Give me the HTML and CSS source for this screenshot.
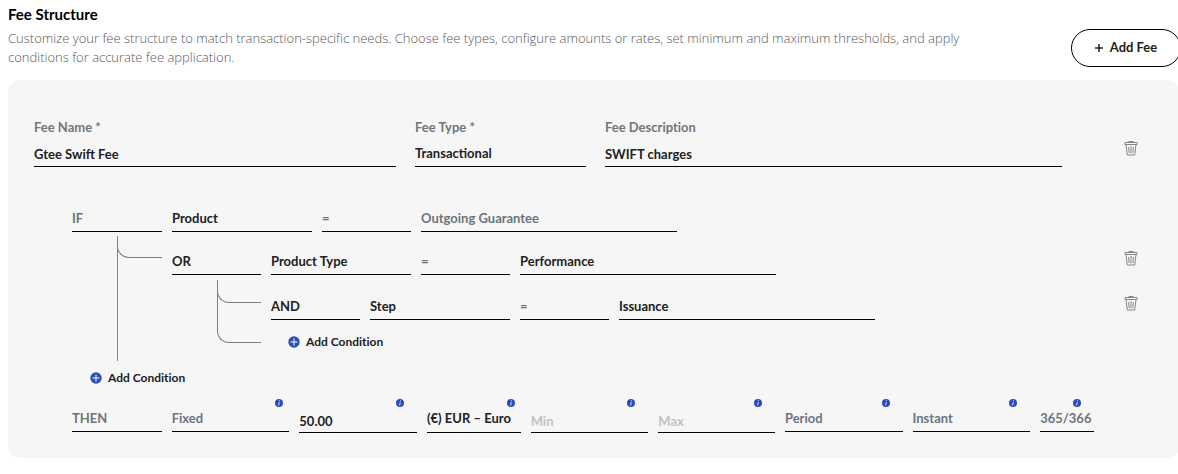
FILE: index.html
```html
<!DOCTYPE html>
<html lang="en">
<head>
<meta charset="utf-8">
<title>Fee Structure</title>
<link rel="stylesheet" href="styles.css">
</head>
<body>
<svg class="sprite" aria-hidden="true">
  <symbol id="trash" viewBox="0 0 14 16">
    <path d="M4.5 1.5h5M1 2.5h12v2H1zM2 4.5l1.3 10.5h7.4L12 4.5M4.6 7l.6 6M7 6v7.500M9.400 7l-.6 6" fill="none" stroke="currentColor"/>
  </symbol>
  <symbol id="add" viewBox="0 0 12 12">
    <circle cx="6" cy="6" r="5.700" fill="#2a4db8"/>
    <path d="M6 2.500v7M2.500 6h7" stroke="#fff" fill="none"/>
  </symbol>
  <symbol id="info" viewBox="0 0 8 8">
    <circle cx="4" cy="4" r="4" fill="#2a4db8"/>
    <path d="M4.500 1.400l-.1.900M4.200 3.200l-.5 3.200" stroke="#dfe5f7" fill="none"/>
  </symbol>
</svg>
<main class="page">
  <header class="header">
    <div class="intro">
      <h1 class="title">Fee Structure</h1>
      <p class="description">Customize your fee structure to match transaction-specific needs. Choose fee types, configure amounts or rates, set minimum and maximum thresholds, and apply conditions for accurate fee application.</p>
    </div>
    <button class="add-fee" type="button"><svg class="plus" viewBox="0 0 8 8" aria-hidden="true"><path d="M4 0v8M0 4h8" stroke="currentColor" stroke-width="1.500"/></svg>Add Fee</button>
  </header>
  <form class="card">
    <div class="summary">
      <div class="labelled"><label for="name">Fee Name *</label><input class="field" id="name" type="text" value="Gtee Swift Fee"></div>
      <div class="labelled"><label for="type">Fee Type *</label><select class="field" id="type"><option>Transactional</option></select></div>
      <div class="labelled"><label for="desc">Fee Description</label><input class="field" id="desc" type="text" value="SWIFT charges"></div>
      <button class="trash" type="button" aria-label="Delete fee"><svg><use href="#trash"/></svg></button>
    </div>

    <div class="rules">
      <div class="rule rule-root">
        <select class="field muted" aria-label="If" disabled><option>IF</option></select>
        <select class="field" aria-label="Attribute"><option>Product</option></select>
        <select class="field muted" aria-label="Operator" disabled><option>=</option></select>
        <select class="field muted" aria-label="Value" disabled><option>Outgoing Guarantee</option></select>
      </div>
      <div class="branch branch-outer">
        <div class="stem"><div class="line"><div class="elbow"></div></div></div>
        <div class="nested">
          <div class="rule rule-outer">
            <select class="field" aria-label="Connector"><option>OR</option></select>
            <select class="field" aria-label="Attribute"><option>Product Type</option></select>
            <select class="field muted" aria-label="Operator" disabled><option>=</option></select>
            <select class="field" aria-label="Value"><option>Performance</option></select>
            <button class="trash" type="button" aria-label="Delete condition"><svg><use href="#trash"/></svg></button>
          </div>
          <div class="branch branch-inner">
            <div class="stem"><div class="line line-end"><div class="elbow"></div></div></div>
            <div class="nested">
              <div class="rule rule-inner">
                <select class="field" aria-label="Connector"><option>AND</option></select>
                <select class="field" aria-label="Attribute"><option>Step</option></select>
                <select class="field muted" aria-label="Operator" disabled><option>=</option></select>
                <select class="field" aria-label="Value"><option>Issuance</option></select>
                <button class="trash" type="button" aria-label="Delete condition"><svg><use href="#trash"/></svg></button>
              </div>
              <button class="add-condition" type="button"><svg><use href="#add"/></svg>Add Condition</button>
            </div>
          </div>
        </div>
      </div>
      <button class="add-condition" type="button"><svg><use href="#add"/></svg>Add Condition</button>
    </div>

    <div class="outcome">
      <div class="cell"><select class="field muted" aria-label="Then" disabled><option>THEN</option></select></div>
      <div class="cell near"><svg class="info"><use href="#info"/></svg><select class="field muted" aria-label="Fee basis" disabled><option>Fixed</option></select></div>
      <div class="cell"><svg class="info"><use href="#info"/></svg><input class="field tall" type="text" aria-label="Amount" value="50.00"></div>
      <div class="cell near"><svg class="info"><use href="#info"/></svg><select class="field currency" aria-label="Currency"><option>(€) EUR – Euro</option></select></div>
      <div class="cell"><svg class="info"><use href="#info"/></svg><input class="field tall" type="text" aria-label="Minimum" placeholder="Min"></div>
      <div class="cell"><svg class="info"><use href="#info"/></svg><input class="field tall" type="text" aria-label="Maximum" placeholder="Max"></div>
      <div class="cell"><svg class="info"><use href="#info"/></svg><select class="field muted" aria-label="Period" disabled><option>Period</option></select></div>
      <div class="cell"><svg class="info"><use href="#info"/></svg><select class="field muted" aria-label="Timing" disabled><option>Instant</option></select></div>
      <div class="cell"><svg class="info"><use href="#info"/></svg><select class="field muted" aria-label="Day count" disabled><option>365/366</option></select></div>
    </div>
  </form>
</main>
</body>
</html>
```

FILE: styles.css
```css
* { box-sizing: border-box; }
body {
  margin: 0;
  background: #fff;
  color: #212121;
  font: 13px/19px Lato, "Open Sans", sans-serif;
  font-variant-ligatures: none;
  overflow-x: hidden;
}
.sprite { display: none; }
button { font: inherit; color: inherit; background: none; border: 0; padding: 0; cursor: pointer; }
.page { padding: 5px 0 16px 8px; margin-right: -2px; }

.header { display: flex; justify-content: space-between; align-items: flex-end; padding-bottom: 13px; }
.intro { max-width: 1010px; }
.title { margin: 0 0 5px; font-size: 15px; line-height: 19px; font-weight: 700; color: #000; }
.description { margin: 0; font-family: "Open Sans", sans-serif; font-size: 13px; font-weight: 300; color: #58585b; }
.add-fee {
  display: flex; align-items: center; justify-content: center; gap: 7px;
  flex: none; width: 110px; height: 38px; margin-right: -1px; padding-bottom: 1px;
  border: 1px solid #000; border-radius: 19px;
  background: #fff; font-size: 13px; font-weight: 700;
}
.plus { width: 8px; height: 8px; }

.card { background: #f6f6f6; border-radius: 13px; padding: 38px 0 25px 26px; }
.summary { display: grid; grid-template-columns: 362fr 171fr 457fr 99px; column-gap: 19px; padding-bottom: 39px; }
.summary .trash { padding-top: 11px; }
.labelled { display: flex; flex-direction: column; gap: 4px; min-width: 0; }
.labelled label { font-size: 13px; font-weight: 700; color: #757578; }

.field {
  display: block; width: 100%; min-width: 0; height: 26px; margin: 0; padding: 0;
  border: 0; border-bottom: 1px solid #000; border-radius: 0;
  background: none; appearance: none; outline: 0; opacity: 1;
  font: 700 13px/19px Lato, "Open Sans", sans-serif; color: #212121;
}
.field.muted { color: #6c757d; }
.field::placeholder { color: #bfc2c8; opacity: 1; }

.trash { display: flex; align-items: center; justify-content: center; color: #85868c; }
.trash svg { width: 14px; height: 16px; }

.rules { padding-left: 38px; }
.rule { display: grid; column-gap: 10px; }
.rule-root { grid-template-columns: 90fr 140fr 89fr 256fr 493fr; }
.rule-outer { grid-template-columns: 89fr 140fr 89fr 256fr 286fr 98px; padding-top: 13px; }
.rule-inner { grid-template-columns: 89fr 140fr 89fr 256fr 187fr 98px; padding-top: 14px; }
.rule .trash { grid-column: 6; height: 18px; }
.branch { display: grid; column-gap: 10px; }
.branch-outer { grid-template-columns: 90fr 1008fr; margin-top: 4px; }
.branch-outer > .nested { padding-bottom: 18px; }
.branch-inner { grid-template-columns: 89fr 909fr; margin-top: 5px; }
.stem { padding-left: 50%; }
.line { height: 100%; border-left: 1px solid #808080; }
.line-end { border-bottom: 1px solid #808080; border-bottom-left-radius: 12px; }
.elbow { height: 22px; margin-left: -1px; border: solid #808080; border-width: 0 0 1px 1px; border-bottom-left-radius: 12px; }
.line-end .elbow { height: 23px; }
.add-condition {
  display: flex; align-items: center; gap: 6px; margin: 9px 0 0 18px;
  font-size: 12px; line-height: 16px; font-weight: 700;
}
.branch-inner .add-condition { margin: 14px 0 -7px 17px; }
.add-condition svg { width: 12px; height: 12px; }

.outcome {
  display: grid; column-gap: 10px; align-items: start;
  grid-template-columns: 90fr 118fr 118fr 94fr 118fr 117fr 118fr 118fr 54fr;
  padding: 20px 86px 0 38px;
}
.cell { display: grid; min-width: 0; }
.cell > * { grid-area: 1 / 1; }
.info { width: 8px; height: 8px; justify-self: end; margin-right: 13px; margin-top: -7px; }
.near .info { margin-right: 6px; }
.field.tall { height: 27px; padding-top: 4px; }
.field.currency { height: 27px; padding-bottom: 2px; }
```
